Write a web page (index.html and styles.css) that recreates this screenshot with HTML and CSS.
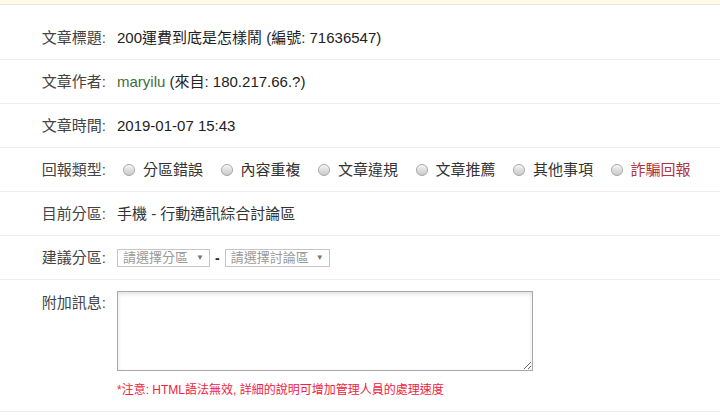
FILE: index.html
```html
<!DOCTYPE html>
<html lang="zh-Hant">
<head>
<meta charset="utf-8">
<title>檢舉文章</title>
<link rel="stylesheet" href="styles.css">
</head>
<body>
<div class="topbar"></div>
<form class="report">
  <div class="row">
    <div class="label">文章標題:</div>
    <div class="value">200運費到底是怎樣鬧 (編號: 71636547)</div>
  </div>
  <div class="row">
    <div class="label">文章作者:</div>
    <div class="value"><span class="author">maryilu</span> (來自: 180.217.66.?)</div>
  </div>
  <div class="row">
    <div class="label">文章時間:</div>
    <div class="value">2019-01-07 15:43</div>
  </div>
  <div class="row">
    <div class="label">回報類型:</div>
    <div class="value radios">
      <label class="opt"><span class="radio"></span>分區錯誤</label>
      <label class="opt"><span class="radio"></span>內容重複</label>
      <label class="opt"><span class="radio"></span>文章違規</label>
      <label class="opt"><span class="radio"></span>文章推薦</label>
      <label class="opt"><span class="radio"></span>其他事項</label>
      <label class="opt fraud"><span class="radio"></span>詐騙回報</label>
    </div>
  </div>
  <div class="row">
    <div class="label">目前分區:</div>
    <div class="value muted">手機 - 行動通訊綜合討論區</div>
  </div>
  <div class="row">
    <div class="label">建議分區:</div>
    <div class="value selects">
      <div class="select sel-a"><span>請選擇分區</span><span class="arrow">▼</span></div>
      <span class="dash">-</span>
      <div class="select sel-b"><span>請選擇討論區</span><span class="arrow">▼</span></div>
    </div>
  </div>
  <div class="row row-msg">
    <div class="label">附加訊息:</div>
    <div class="value msg">
      <textarea class="textarea"></textarea>
      <div class="note">*注意: HTML語法無效, 詳細的說明可增加管理人員的處理速度</div>
    </div>
  </div>
</form>
</body>
</html>
```
FILE: styles.css
```css
html, body {
  margin: 0;
  padding: 0;
  background: #fff;
}
body {
  font-family: "Liberation Sans", "Noto Sans CJK TC", sans-serif;
  font-size: 15px;
  color: #222;
}
.topbar {
  height: 4px;
  background: #fffbe6;
  border-bottom: 1px solid #e6e6e6;
}
.report {
  padding-top: 11px;
}
.row {
  display: flex;
  align-items: center;
  height: 43px;
  border-bottom: 1px solid #ececec;
}
.label {
  width: 106px;
  flex: none;
  text-align: right;
  color: #444;
  line-height: 20px;
  white-space: nowrap;
}
.value {
  margin-left: 11px;
  line-height: 20px;
  white-space: nowrap;
}
.author {
  color: #3c6e3c;
}
.muted {
  color: #333;
}
.radios {
  display: flex;
  align-items: center;
  padding-left: 6px;
  gap: 17.5px;
}
.opt {
  display: flex;
  align-items: center;
  gap: 8px;
  color: #333;
}
.opt.fraud {
  color: #b3343a;
}
.radio {
  width: 10px;
  height: 10px;
  border-radius: 50%;
  border: 1px solid #a4a4a4;
  background: linear-gradient(180deg, #f2f2f2 0%, #dadada 60%, #cbcbcb 100%);
  box-shadow: inset 0 1px 1px rgba(255,255,255,0.8);
}
.selects {
  display: flex;
  align-items: center;
}
.select {
  box-sizing: border-box;
  height: 18px;
  border: 1px solid #c6c6c6;
  background: #fff;
  display: flex;
  align-items: center;
  justify-content: space-between;
  padding: 0 5px 0 5px;
  font-size: 13px;
  color: #9a9a9a;
  line-height: 16px;
}
.sel-a { width: 93px; }
.sel-b { width: 105px; }
.arrow {
  font-size: 8px;
  color: #777;
}
.dash {
  margin: 0 5px 0 5px;
  color: #222;
  font-weight: bold;
  font-size: 14px;
}
.row-msg {
  align-items: flex-start;
  padding: 11px 0 0;
  box-sizing: border-box;
  height: 132px;
}
.row-msg .label {
  line-height: 24px;
}
.msg {
  display: flex;
  flex-direction: column;
}
.textarea {
  box-sizing: border-box;
  width: 416px;
  height: 80px;
  margin: 0;
  border: 1px solid #a9a9a9;
  box-shadow: inset 0 2px 4px rgba(0,0,0,0.12);
  font-family: inherit;
}
.note {
  margin-top: 11px;
  font-size: 12px;
  line-height: 16px;
  color: #f0223c;
}
```
